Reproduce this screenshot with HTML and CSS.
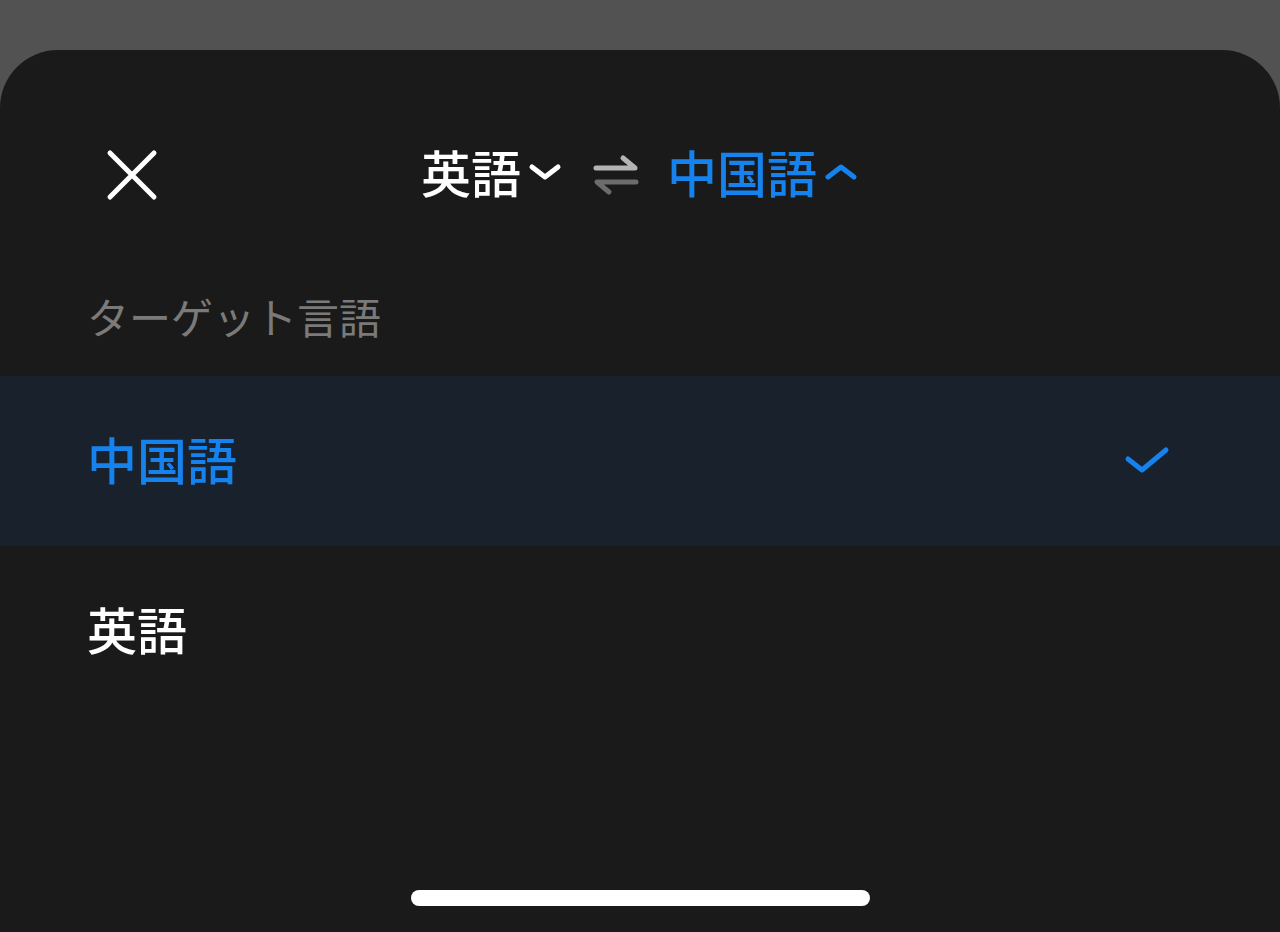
FILE: index.html
```html
<!DOCTYPE html>
<html lang="ja">
<head>
    <meta charset="UTF-8">
    <title>言語を選択</title>
    <link rel="stylesheet" href="styles.css">
</head>
<body>
<div class="backdrop"></div>
<div class="sheet">
    <div class="header">
        <div class="close">
            <svg width="56" height="56" viewBox="0 0 56 56">
                <path d="M6 6 L50 50 M50 6 L6 50" stroke="#fff" stroke-width="5" stroke-linecap="round" fill="none"/>
            </svg>
        </div>
        <div class="title">
            <span class="lang">英語</span>
            <svg class="chev" width="36" height="24" viewBox="0 0 36 24">
                <path d="M5 7 L18 17 L31 7" stroke="#fff" stroke-width="5" stroke-linecap="round" stroke-linejoin="round" fill="none"/>
            </svg>
            <svg class="swap" width="46" height="44" viewBox="0 0 46 44">
                <path d="M3 15 L42 15 L30 5" stroke="#b4b4b4" stroke-width="5" stroke-linecap="round" stroke-linejoin="round" fill="none"/>
                <path d="M43 29 L4 29 L16 39" stroke="#6c6c6c" stroke-width="5" stroke-linecap="round" stroke-linejoin="round" fill="none"/>
            </svg>
            <span class="lang active">中国語</span>
            <svg class="chev" width="36" height="24" viewBox="0 0 36 24">
                <path d="M5 17 L18 7 L31 17" stroke="#1682ee" stroke-width="5" stroke-linecap="round" stroke-linejoin="round" fill="none"/>
            </svg>
        </div>
        <div></div>
    </div>
    <div class="label">ターゲット言語</div>
    <ul class="list">
        <li class="selected">
            <span>中国語</span>
            <svg width="48" height="32" viewBox="0 0 48 32">
                <path d="M4 14 L18 25 L42 5" stroke="#1682ee" stroke-width="5" stroke-linecap="round" stroke-linejoin="round" fill="none"/>
            </svg>
        </li>
        <li><span>英語</span></li>
    </ul>
    <div class="home"></div>
</div>
</body>
</html>
```

FILE: styles.css
```css
* {
    margin: 0;
    padding: 0;
}

ul {
    list-style: none;
}

body {
    background-color: #525252;
    font-family: "Noto Sans CJK JP", "Noto Sans", sans-serif;
    width: 1280px;
    height: 932px;
    overflow: hidden;
}

.backdrop {
    height: 50px;
}

.sheet {
    height: 882px;
    background-color: #1a1a1a;
    border-radius: 58px 58px 0 0;
    display: flex;
    flex-direction: column;
    padding-top: 75px;
    box-sizing: border-box;
}

.header {
    height: 100px;
    display: grid;
    grid-template-columns: 1fr auto 1fr;
    align-items: center;
}

.close {
    padding-left: 104px;
    display: flex;
    align-items: center;
}

.title {
    display: flex;
    align-items: center;
}

.lang {
    font-size: 50px;
    font-weight: 500;
    color: #fff;
    line-height: 60px;
    margin-bottom: 9px;
}

.lang.active {
    color: #1682ee;
}

.chev {
    margin-left: 6px;
    margin-top: -6px;
}

.swap {
    margin: 0 28px 0 30px;
}

.label {
    margin-top: 66px;
    padding-left: 87px;
    font-size: 42px;
    line-height: 50px;
    color: #7a7a7a;
}

.list {
    margin-top: 35px;
}

.list li {
    height: 170px;
    display: flex;
    align-items: center;
    justify-content: space-between;
    padding: 0 108px 0 87px;
    font-size: 50px;
    font-weight: 500;
    color: #fff;
}

.list li span {
    padding-bottom: 7px;
}

.list li.selected {
    background-color: #18212c;
    color: #1682ee;
}

.home {
    width: 459px;
    height: 16px;
    border-radius: 8px;
    background-color: #fff;
    margin: auto auto 26px;
}
```
